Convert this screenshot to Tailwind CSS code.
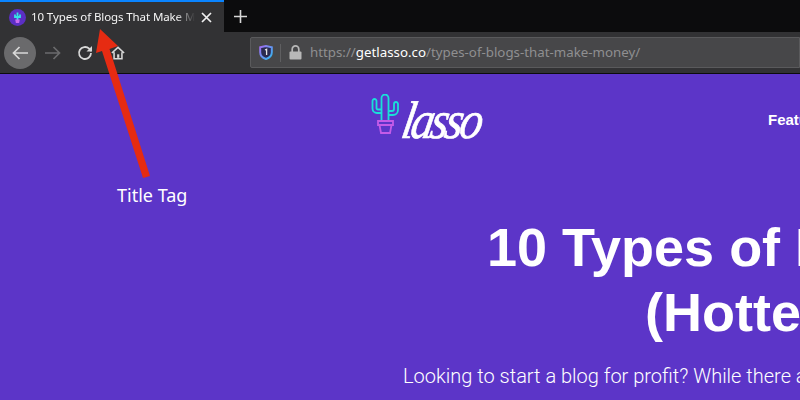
<!DOCTYPE html>
<html lang="en">
<head>
    <meta charset="UTF-8">
    <title>10 Types of Blogs That Make Money</title>
    <script src="https://cdn.jsdelivr.net/npm/@tailwindcss/browser@4"></script>
</head>
<body class="relative w-[800px] h-[400px] overflow-hidden bg-[#5c35c8] font-['Liberation_Sans',sans-serif]">
    <!-- tab strip -->
    <div class="flex h-[32px] bg-[#0c0c0d]">
        <div class="flex items-center w-[224px] h-full bg-[#323234] border-t-2 border-[#0a84ff] pl-[9px] pr-[12px]">
            <svg class="w-[17px] h-[17px] shrink-0" viewBox="0 0 17 17">
                <circle cx="8.5" cy="8.5" r="8.5" fill="#5b2fc4"/>
                <path d="M8.5 11V3.500M6 5.500V8h5V5.500" fill="none" stroke="#35e4e4" stroke-width="1.800"/>
                <path d="M6.200 10.500h4.600l-.7 3.500H6.900z" fill="#c86bf0"/>
            </svg>
            <span class="ml-[5px] w-[164px] overflow-hidden whitespace-nowrap text-[11.5px] tracking-[-0.1px] text-[#f4f4f4] font-['Noto_Sans',sans-serif] [mask-image:linear-gradient(to_right,black_88%,transparent)]">10 Types of Blogs That Make Money</span>
            <svg class="ml-auto w-[11px] h-[11px] shrink-0" viewBox="0 0 11 11">
                <path d="M1 1l9 9M10 1l-9 9" stroke="#f0f0f0" stroke-width="1.700"/>
            </svg>
        </div>
        <div class="flex items-center justify-center w-[33px]">
            <svg class="w-[13px] h-[13px]" viewBox="0 0 13 13">
                <path d="M6.500 0v13M0 6.500h13" stroke="#d8d8d8" stroke-width="1.600"/>
            </svg>
        </div>
    </div>

    <!-- toolbar -->
    <div class="flex items-center h-[42px] bg-[#323234] border-b border-[#0c0c0d] pl-[4px]">
        <div class="flex items-center justify-center w-[32px] h-[32px] rounded-full bg-[#6a6a6c]">
            <svg class="w-[16px] h-[14px]" viewBox="0 0 16 14">
                <path d="M7.500 1L1.500 7l6 6M1.500 7H16" fill="none" stroke="#d8d8d8" stroke-width="1.700"/>
            </svg>
        </div>
        <svg class="ml-[9px] w-[16px] h-[14px]" viewBox="0 0 16 14">
            <path d="M8.500 1l6 6-6 6M14.500 7H0" fill="none" stroke="#6b6b6d" stroke-width="1.700"/>
        </svg>
        <svg class="ml-[16px] w-[16px] h-[16px]" viewBox="0 0 16 16">
            <path d="M14 8a6 6 0 1 1-1.800-4.300L14.500 6" fill="none" stroke="#d8d8d8" stroke-width="1.800"/>
            <path d="M15 1v5.500H9.500z" fill="#d8d8d8"/>
        </svg>
        <svg class="ml-[18px] w-[14px] h-[14px]" viewBox="0 0 16 16">
            <path d="M1 8l7-6.500L15 8M3.500 7v7.500h9V7" fill="none" stroke="#d8d8d8" stroke-width="1.800"/>
            <rect x="7" y="9.500" width="2.500" height="4" fill="#d8d8d8"/>
        </svg>
        <div class="flex items-center ml-[125px] flex-1 h-[31px] bg-[#474749] border border-[#5a5a5c] rounded-l-[2px] pl-[8px]">
            <svg class="w-[14px] h-[15px] shrink-0" viewBox="0 0 14 15">
                <defs>
                    <linearGradient id="shield" x1="0" y1="0" x2="1" y2="1">
                        <stop offset="0" stop-color="#a06cf0"/>
                        <stop offset="1" stop-color="#30b8f0"/>
                    </linearGradient>
                </defs>
                <path d="M1.200 2.200L7 1l5.800 1.200v5C12.800 11 10 13 7 14 4 13 1.200 11 1.200 7.200z" fill="#2a2a50" stroke="url(#shield)" stroke-width="2"/>
                <path d="M6 5l1.600-.8V10" fill="none" stroke="#e8e8e8" stroke-width="1.300"/>
            </svg>
            <div class="ml-[7px] w-px h-[18px] bg-[#5f5f61]"></div>
            <svg class="ml-[8px] w-[13px] h-[15px] shrink-0" viewBox="0 0 13 15">
                <path d="M3.200 7V4.200a3.300 3.300 0 0 1 6.600 0V7" fill="none" stroke="#b8b8b8" stroke-width="1.700"/>
                <rect x="0.500" y="6.500" width="12" height="8" rx="1" fill="#b8b8b8"/>
            </svg>
            <span class="ml-[8px] whitespace-nowrap text-[13.3px] text-[#8f8f91] font-['Noto_Sans',sans-serif]">https://<span class="text-white">getlasso.co</span>/types-of-blogs-that-make-money/</span>
        </div>
    </div>

    <!-- page -->
    <main class="text-white overflow-hidden">
        <div class="flex items-center h-[90px] pl-[370px]">
            <svg class="w-[32px] h-[40px] shrink-0 mb-[10px]" viewBox="0 0 32 40">
                <path d="M11.500 27V4a3.500 3.500 0 0 1 7 0v23M11.500 19H7a4.500 4.500 0 0 1-4.500-4.500V7a2 2 0 0 1 4 0v7a1.500 1.500 0 0 0 1.500 1.500h3.500M18.500 21H23a5 5 0 0 0 5-5V10a2 2 0 0 0-4 0v5a2 2 0 0 1-2 2h-3.500" fill="none" stroke="#19e0d8" stroke-width="1.800"/>
                <path d="M8 27h15v4h-1.500l-1.500 8H11l-1.500-8H8zM9.500 31h12" fill="none" stroke="#c45be8" stroke-width="1.800"/>
            </svg>
            <span class="ml-[1px] mt-[4px] text-[46px] leading-none italic font-['Liberation_Serif',serif] tracking-[-3.500px] scale-y-[1.15] -skew-x-12 [-webkit-text-stroke:0.6px_white]">lasso</span>
            <span class="ml-auto mt-[2px] w-[32px] shrink-0 overflow-hidden text-[15px] font-bold whitespace-nowrap">Features</span>
        </div>
        <h1 class="mt-[51px] text-[54px] leading-[65px] font-bold whitespace-nowrap">
            <span class="block pl-[487px]">10 Types of Blogs</span>
            <span class="block pl-[645px]">(Hottest Niches)</span>
        </h1>
        <p class="mt-[17px] pl-[403px] text-[20px] leading-[28px] font-light whitespace-nowrap font-['Roboto',sans-serif]">Looking to start a blog for profit? While there are</p>
    </main>

    <!-- annotation -->
    <svg class="absolute inset-0 w-[800px] h-[400px] pointer-events-none" viewBox="0 0 800 400">
        <path d="M100 29L118 46 109.500 49 150 176 143 178 102 51 96 53z" fill="#e62b12"/>
    </svg>
    <span class="absolute left-[117px] top-[184px] text-[18px] leading-[22px] text-white font-['Noto_Sans',sans-serif]">Title Tag</span>
</body>
</html>
